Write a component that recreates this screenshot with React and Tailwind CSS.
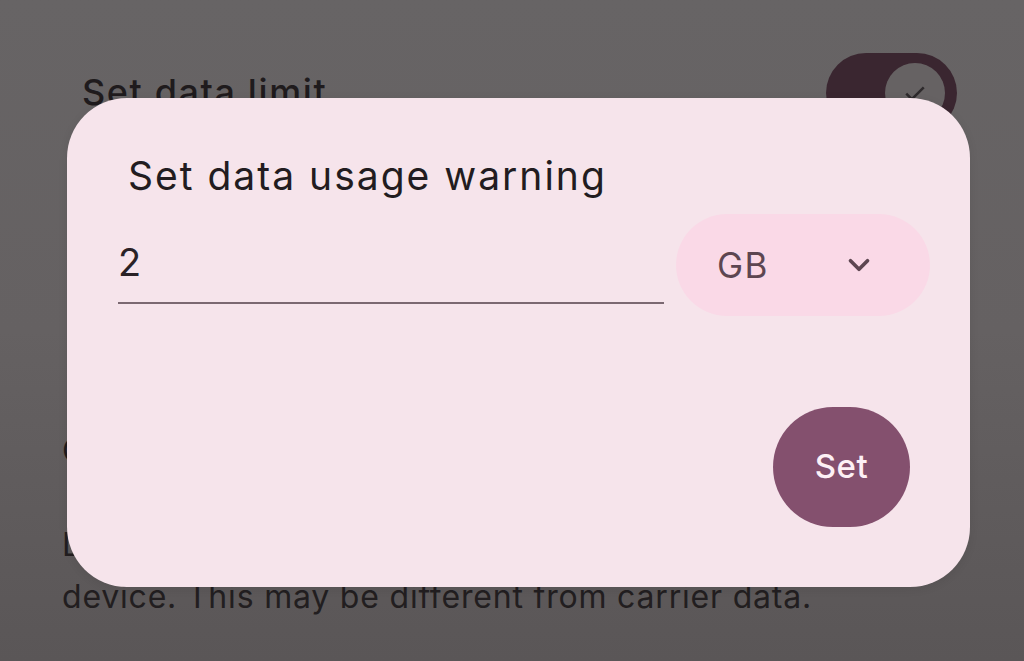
import React, { useState } from "react";

function Toggle({ on }) {
  return (
    <div className="flex h-[80px] w-[131px] items-center justify-end rounded-full bg-[#3a2630] pr-[12px]">
      <div className="flex h-[60px] w-[60px] items-center justify-center rounded-full bg-[#666263]">
        {on && (
          <svg width="30" height="30" viewBox="0 0 24 24" fill="none" stroke="#2e2a2c" strokeWidth="2">
            <path d="M5 12.5l4.5 4.5L19 7.5" />
          </svg>
        )}
      </div>
    </div>
  );
}

function UnitPicker({ unit }) {
  return (
    <button className="flex h-[102px] w-[254px] items-center justify-between rounded-full bg-[#fad9e7] pl-[41px] pr-[54px] text-[35px] tracking-[1.5px] text-[#5d4651]">
      <span>{unit}</span>
      <svg width="34" height="34" viewBox="0 0 24 24" fill="none" stroke="#5d4651" strokeWidth="2.6" strokeLinecap="round" strokeLinejoin="round">
        <path d="M6 9l6 6 6-6" />
      </svg>
    </button>
  );
}

export default function App() {
  const [value, setValue] = useState("2");

  return (
    <div
      className="relative h-[661px] w-[1024px] overflow-hidden bg-gradient-to-b from-[#676465] via-[#656162] to-[#5a5657] text-[#1f1b1d]"
      style={{ fontFamily: "Inter, 'Open Sans', sans-serif" }}
    >
      {/* settings page behind the scrim */}
      <div className="flex flex-col px-[62px] pt-[53px]">
        <div className="flex items-start justify-between pl-[20px] pr-[5px]">
          <span className="mt-[17px] text-[36px] font-medium leading-[44px] tracking-[1.6px]">Set data limit</span>
          <Toggle on />
        </div>
        <div className="mt-[296px] text-[32px] leading-[44px]">C</div>
        <div className="mt-[46px] text-[32px] leading-[52px] tracking-[0.8px] text-[#221e20]">
          Data usage is measured by your
          <br />
          device. This may be different from carrier data.
        </div>
      </div>

      {/* dialog */}
      <div className="absolute left-[67px] top-[98px] flex h-[489px] w-[903px] flex-col rounded-[60px] bg-[#f6e4eb] pl-[51px] pr-[40px] pt-[52px] shadow-[0_2px_10px_rgba(0,0,0,0.08)]">
        <h2 className="pl-[10px] text-[39px] font-normal leading-[52px] tracking-[2px] text-[#221c20]">Set data usage warning</h2>
        <div className="mt-[12px] flex items-center gap-[12px]">
          <div className="flex flex-1 flex-col self-start pt-[18px]">
            <input
              value={value}
              onChange={(e) => setValue(e.target.value)}
              className="h-[60px] w-full bg-transparent text-[38px] text-[#2a2226] outline-none"
            />
            <div className="mt-[10px] h-[2px] w-full bg-[#7b6871]" />
          </div>
          <UnitPicker unit="GB" />
        </div>
        <div className="mt-auto mb-[60px] flex justify-end pr-[20px]">
          <button className="h-[120px] w-[137px] rounded-full bg-[#84506e] text-[33px] font-medium tracking-[0.5px] text-[#fdf0f5]">Set</button>
        </div>
      </div>
    </div>
  );
}
